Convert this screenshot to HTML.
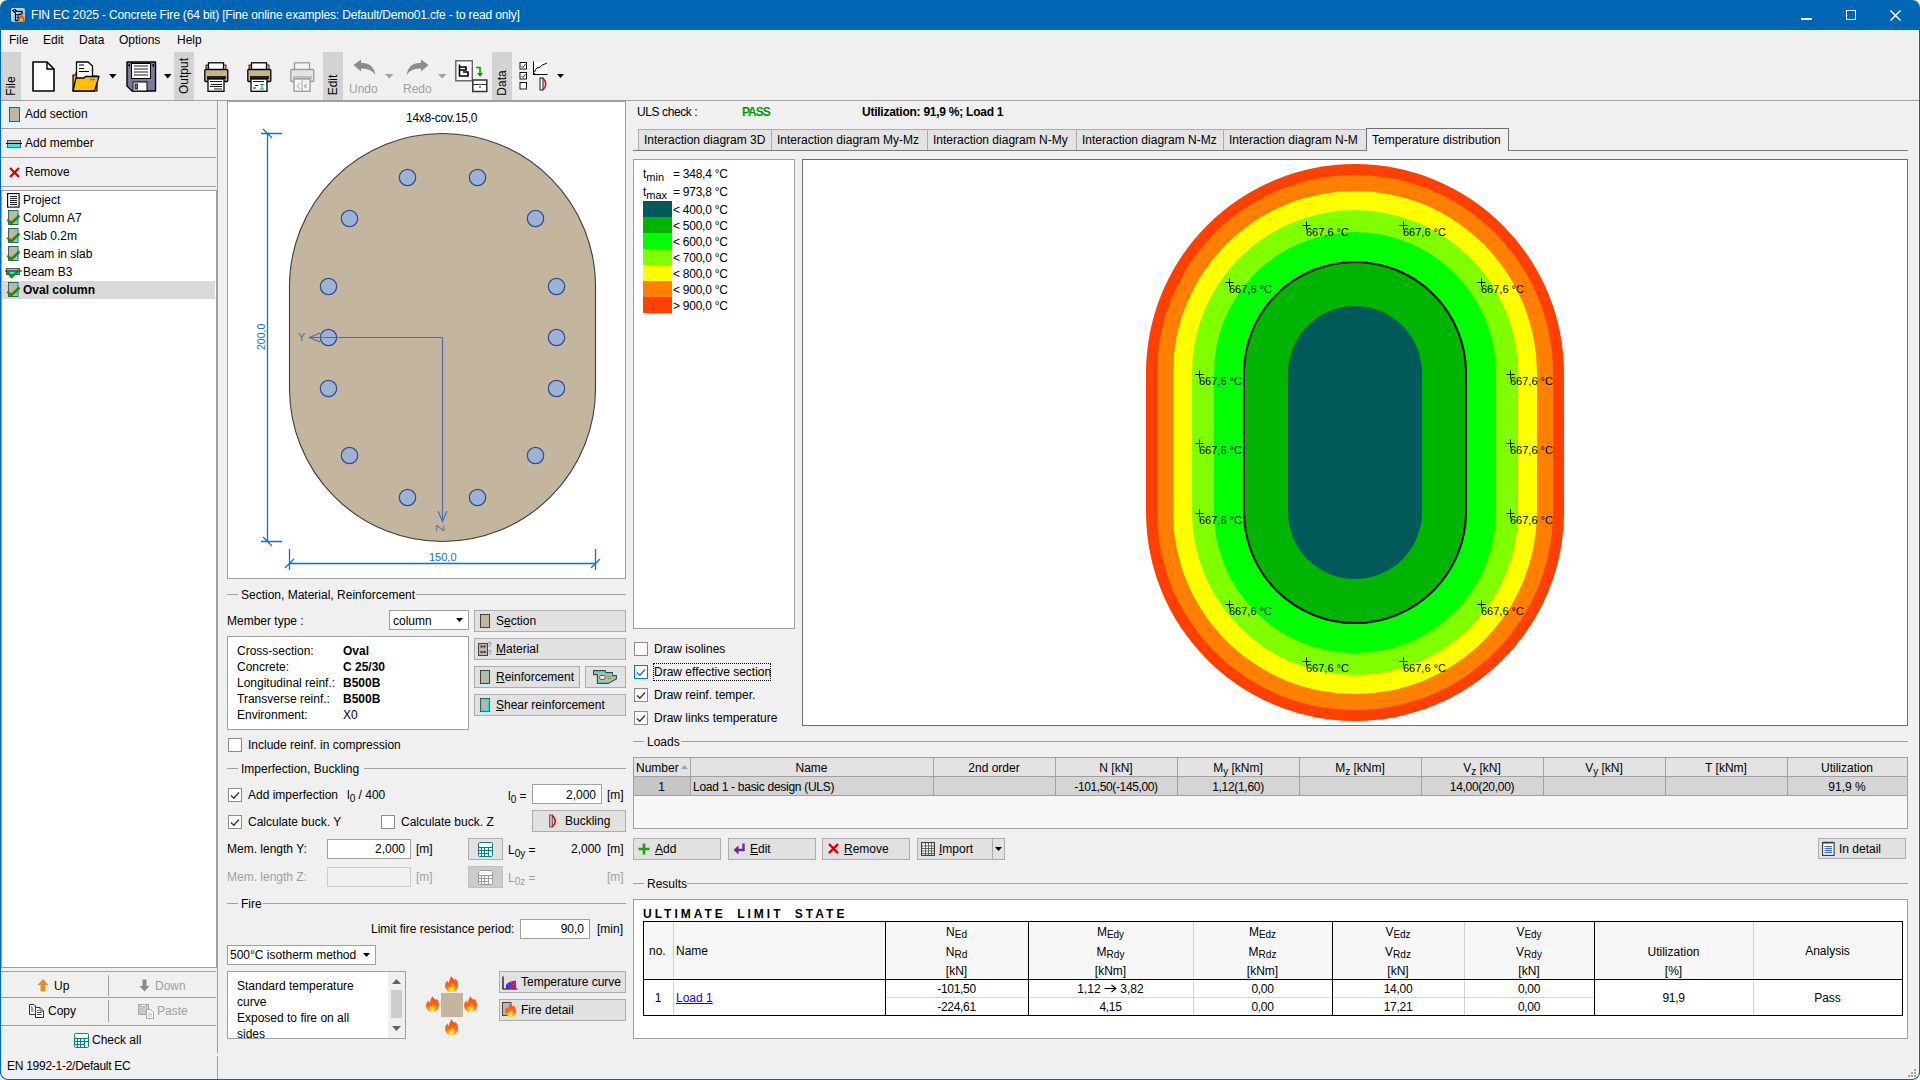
<!DOCTYPE html>
<html><head><meta charset="utf-8">
<style>
*{margin:0;padding:0;box-sizing:border-box}
html,body{width:1920px;height:1080px;overflow:hidden;background:#f0f0f0;font-family:"Liberation Sans",sans-serif;font-size:12px;color:#000}
.a{position:absolute}
.t{position:absolute;white-space:pre;line-height:14px;font-size:12px}
.b{font-weight:bold}
.btn{position:absolute;background:#e1e1e1;border:1px solid #adadad}
.box{position:absolute;background:#fff;border:1px solid #a0a0a0}
.cb{position:absolute;width:14px;height:14px;background:#fff;border:1px solid #333}
.hl{position:absolute;height:1px;background:#a0a0a0}
.vl{position:absolute;width:1px;background:#a0a0a0}
.gray{color:#a0a0a0}
svg{position:absolute;overflow:visible}
u{text-decoration:underline;text-underline-offset:1px}
</style></head><body>
<!-- window frame -->
<div class="a" style="left:0;top:0;width:1920px;height:30px;background:#0066b4;border-radius:8px 8px 0 0"></div>
<div class="a" style="left:0;top:30px;width:1px;height:1044px;background:#0066bb"></div>
<div class="a" style="left:1919px;top:30px;width:1px;height:1044px;background:#0066bb"></div>
<div class="a" style="left:0;top:1072px;width:1920px;height:8px;border:1px solid #0066bb;border-top:none;border-radius:0 0 8px 8px"></div><svg style="left:1909px;top:1069px" width="8" height="8" viewBox="0 0 8 8"><path d="M5 0h2v2H5zM2 3h2v2H2zM5 3h2v2H5zM-1 6h2v2h-2zM2 6h2v2H2zM5 6h2v2H5z" fill="#a0a0a0"/></svg>
<!-- title -->
<svg style="left:11px;top:8px" width="15" height="15" viewBox="0 0 15 15"><defs><linearGradient id="tg" x1="0" y1="0" x2="1" y2="1"><stop offset="0" stop-color="#dcecfb"/><stop offset="1" stop-color="#7fb2e6"/></linearGradient></defs><rect x="0" y="0" width="14" height="14" rx="2" fill="url(#tg)"/><path d="M1.5 2.5L4 1.5L6 3.5L11 3.5V6L7 6.5V12.5H4.5V5Z" fill="#fff" stroke="#000" stroke-width="1.3" stroke-linejoin="round"/><circle cx="4.3" cy="3.5" r="0.7" fill="#00f"/><circle cx="5.5" cy="6.5" r="0.7" fill="#00f"/><circle cx="5" cy="9.5" r="0.7" fill="#00f"/><path d="M10.5 5.5C11 8 13.5 9 13.5 11.5A3.2 3.2 0 0 1 7.2 11.5C7.2 9.5 9.5 8 10.5 5.5Z" fill="#f05010"/><path d="M10.3 9.5C11 10.5 12 11 12 12.3A1.8 1.8 0 0 1 8.6 12.3C8.6 11.3 9.8 10.5 10.3 9.5Z" fill="#ffd000"/></svg>
<div class="t" style="left:31px;top:8px;color:#fff;font-size:12px;letter-spacing:-0.15px">FIN EC 2025 - Concrete Fire (64 bit) [Fine online examples: Default/Demo01.cfe - to read only]</div>
<div class="a" style="left:1801px;top:18px;width:11px;height:2px;background:#fff"></div>
<div class="a" style="left:1846px;top:10px;width:10px;height:10px;border:1px solid #fff"></div>
<svg style="left:1890px;top:10px" width="11" height="11" viewBox="0 0 11 11"><path d="M0.5 0.5L10.5 10.5M10.5 0.5L0.5 10.5" stroke="#fff" stroke-width="1.5"/></svg>
<!-- menu -->
<div class="t" style="left:9px;top:33px">File</div>
<div class="t" style="left:43px;top:33px">Edit</div>
<div class="t" style="left:79px;top:33px">Data</div>
<div class="t" style="left:119px;top:33px">Options</div>
<div class="t" style="left:177px;top:33px">Help</div>
<!-- TOOLBAR -->

<div class="a" style="left:1px;top:52px;width:20px;height:48px;background:#d3d3d3"></div>
<div class="t" style="left:-3px;top:79px;transform:rotate(-90deg);transform-origin:50% 50%;width:28px;text-align:center">File</div>
<div class="a" style="left:174px;top:52px;width:20px;height:48px;background:#d3d3d3"></div>
<div class="t" style="left:164px;top:69px;transform:rotate(-90deg);width:40px;text-align:center">Output</div>
<div class="a" style="left:323px;top:52px;width:20px;height:48px;background:#d3d3d3"></div>
<div class="t" style="left:317px;top:78px;transform:rotate(-90deg);width:32px;text-align:center">Edit</div>
<div class="a" style="left:492px;top:52px;width:20px;height:48px;background:#d3d3d3"></div>
<div class="t" style="left:484px;top:76px;transform:rotate(-90deg);width:36px;text-align:center">Data</div>
<!-- new -->
<svg style="left:32px;top:61px" width="23" height="31" viewBox="0 0 23 31"><path d="M1 1 H15 L22 8 V30 H1 Z" fill="#fff" stroke="#000" stroke-width="1.6" stroke-linejoin="round"/><path d="M15 1 V8 H22" fill="none" stroke="#000" stroke-width="1.4"/></svg>
<!-- open -->
<svg style="left:72px;top:61px" width="28" height="31" viewBox="0 0 28 31"><path d="M1 14 H4 V12 H20 V15 H25 V30 H1Z" fill="#f2b000" stroke="#000" stroke-width="1.2"/><path d="M4.5 1 H16 L20.5 5 V18 H4.5Z" fill="#fff" stroke="#000" stroke-width="1.3"/><path d="M7 4H12M7 7.5H12M7 10.5H17" stroke="#000" stroke-width="1"/><path d="M4 17 H12 L13.5 15.5 H27 L22.5 30 H1 Z" fill="#ffc000" stroke="#000" stroke-width="1.3" stroke-linejoin="round"/><path d="M18 18.5H23" stroke="#7a7a9a" stroke-width="1.5"/></svg>
<svg style="left:109px;top:74px" width="8" height="5" viewBox="0 0 8 5"><path d="M0 0H7.5L3.75 4.5Z" fill="#000"/></svg>
<!-- save -->
<svg style="left:126px;top:61px" width="31" height="31" viewBox="0 0 31 31"><path d="M1 1 H29.5 V30 H6 L1 25Z" fill="#7b7ba0" stroke="#000" stroke-width="1.4" stroke-linejoin="round"/><rect x="5.5" y="2.5" width="19" height="15" fill="#fff" stroke="#000" stroke-width="1"/><path d="M8 5H22M8 8H22M8 11H22M8 14H22" stroke="#000" stroke-width="0.9"/><rect x="7" y="21" width="14" height="9" fill="#fff" stroke="#000" stroke-width="1"/><rect x="9" y="23" width="2.5" height="5" fill="#7b7ba0" stroke="#000" stroke-width="0.8"/><rect x="2.5" y="3" width="1.5" height="2.5" fill="#000"/><rect x="26.5" y="3" width="1.5" height="2.5" fill="#000"/></svg>
<svg style="left:164px;top:74px" width="8" height="5" viewBox="0 0 8 5"><path d="M0 0H7.5L3.75 4.5Z" fill="#000"/></svg>
<!-- printers -->
<svg style="left:204px;top:62px" width="25" height="30" viewBox="0 0 25 30"><rect x="4.5" y="0.8" width="15" height="7" fill="#fff" stroke="#000" stroke-width="1.3"/><rect x="2" y="3" width="2.5" height="5" fill="#a08a60" stroke="#000" stroke-width="0.8"/><rect x="19.5" y="3" width="2.5" height="5" fill="#c8b48a" stroke="#000" stroke-width="0.8"/><rect x="0.8" y="7.5" width="23" height="12" rx="1" fill="#c8b48a" stroke="#000" stroke-width="1.3"/><rect x="3" y="14" width="19" height="3" fill="#222"/><rect x="4" y="17" width="16" height="12.3" fill="#fff" stroke="#000" stroke-width="1.3"/><path d="M6 19.5H18M7 22.5H18M6 24.5H18M10 27H18" stroke="#000" stroke-width="0.9"/></svg>
<svg style="left:247px;top:62px" width="25" height="30" viewBox="0 0 25 30"><rect x="4.5" y="0.8" width="15" height="7" fill="#fff" stroke="#000" stroke-width="1.3"/><rect x="2" y="3" width="2.5" height="5" fill="#a08a60" stroke="#000" stroke-width="0.8"/><rect x="19.5" y="3" width="2.5" height="5" fill="#c8b48a" stroke="#000" stroke-width="0.8"/><rect x="0.8" y="7.5" width="23" height="12" rx="1" fill="#c8b48a" stroke="#000" stroke-width="1.3"/><rect x="3" y="14" width="19" height="3" fill="#222"/><rect x="4" y="17" width="16" height="12.3" fill="#fff" stroke="#000" stroke-width="1.3"/><path d="M6 19.5H17M8 23.5H11M6 26H9" stroke="#000" stroke-width="0.9"/><path d="M13 22.5H17M15 22.5V27M13 27H17" stroke="#109898" stroke-width="1"/></svg>
<svg style="left:290px;top:62px" width="25" height="30" viewBox="0 0 25 30" opacity="0.35"><rect x="4.5" y="0.8" width="15" height="7" fill="#fff" stroke="#000" stroke-width="1.3"/><rect x="0.8" y="7.5" width="23" height="12" rx="1" fill="#ccc" stroke="#000" stroke-width="1.3"/><rect x="3" y="14" width="19" height="3" fill="#666"/><rect x="4" y="17" width="16" height="12.3" fill="#fff" stroke="#000" stroke-width="1.3"/><path d="M12 18V29M10 21L7 24L10 27M14 24L16 22V26Z" stroke="#000" stroke-width="0.9" fill="none"/></svg>
<!-- undo/redo -->
<svg style="left:353px;top:59px" width="24" height="17" viewBox="0 0 24 17"><path d="M0.5 6 L8 0.5 V4 Q20 3 22.5 16 Q18 9 8 9.5 V12.5Z" fill="#8c8c8c"/></svg>
<div class="t" style="left:349px;top:82px;color:#a0a0a0">Undo</div>
<svg style="left:385px;top:74px" width="9" height="5" viewBox="0 0 9 5"><path d="M0 0H8.5L4.25 4.5Z" fill="#a0a0a0"/></svg>
<svg style="left:405px;top:59px" width="24" height="17" viewBox="0 0 24 17"><path d="M23.5 6 L16 0.5 V4 Q4 3 1.5 16 Q6 9 16 9.5 V12.5Z" fill="#8c8c8c"/></svg>
<div class="t" style="left:403px;top:82px;color:#a0a0a0">Redo</div>
<svg style="left:438px;top:74px" width="9" height="5" viewBox="0 0 9 5"><path d="M0 0H8.5L4.25 4.5Z" fill="#a0a0a0"/></svg>
<!-- data icon -->
<svg style="left:455px;top:60px" width="33" height="33" viewBox="0 0 33 33"><rect x="0.8" y="0.8" width="16.5" height="20" fill="#fff" stroke="#606060" stroke-width="1.4"/><path d="M4.5 4.5V16H13V12H8M4.5 10H11V7H4.5" fill="none" stroke="#000" stroke-width="1.6"/><path d="M21 7.5H25V15" stroke="#00a000" stroke-width="1.6" fill="none"/><path d="M22 13L25 17L28 13Z" fill="#00a000"/><rect x="17.8" y="20" width="14" height="11.5" fill="#fff" stroke="#333" stroke-width="1.5"/><path d="M18 24.5H31.5M25 26V28" stroke="#333" stroke-width="1.2"/></svg>
<svg style="left:519px;top:61px" width="46" height="30" viewBox="0 0 46 30"><rect x="1" y="1.5" width="6.5" height="6.5" fill="#fff" stroke="#000" stroke-width="0.9"/><path d="M2.5 5L4 6.5L6.5 3" stroke="#000" fill="none" stroke-width="0.8"/><rect x="1" y="11.5" width="6.5" height="6.5" fill="#fff" stroke="#000" stroke-width="0.9"/><path d="M2.5 15L4 16.5L6.5 13" stroke="#000" fill="none" stroke-width="0.8"/><rect x="1" y="21.5" width="6.5" height="6.5" fill="#fff" stroke="#000" stroke-width="0.9"/><rect x="15" y="1" width="13" height="12" fill="#fff"/><path d="M14.5 0.5V13.5H28.5M14 14L16 12" stroke="#000" stroke-width="1" fill="none"/><path d="M15.5 11Q18 5 20 7Q22 4 28 2" stroke="#000" stroke-width="1" fill="none"/><rect x="21" y="17" width="3" height="12" fill="#fff" stroke="#000" stroke-width="0.9"/><path d="M24 17Q29.5 23 24 29" stroke="#e00000" stroke-width="1.4" fill="none"/><path d="M38 13H45L41.5 17Z" fill="#000"/></svg>

<div class="hl" style="left:1px;top:100px;width:1918px"></div>
<!-- LEFT PANEL -->

<div class="vl" style="left:217px;top:101px;height:952px"></div>
<div class="vl" style="left:217px;top:1056px;height:23px"></div>
<svg style="left:9px;top:107px" width="11" height="15" viewBox="0 0 11 15"><rect x="0.5" y="0.5" width="10" height="14" fill="#c4b59f" stroke="#555"/><rect x="1" y="1" width="2" height="2" fill="#0ff"/><rect x="8" y="1" width="2" height="2" fill="#0ff"/><rect x="1" y="12" width="2" height="2" fill="#0ff"/><rect x="8" y="12" width="2" height="2" fill="#0ff"/></svg>
<div class="t" style="left:25px;top:107px">Add section</div>
<div class="hl" style="left:1px;top:128px;width:215px"></div>
<svg style="left:6px;top:140px" width="16" height="8" viewBox="0 0 16 8"><rect x="1.5" y="0.5" width="13" height="7" fill="#c4b59f" stroke="#555"/><rect x="2" y="4.5" width="12" height="2.5" fill="#0ff"/><path d="M0 3.5H16" stroke="#000" stroke-width="0.9"/></svg>
<div class="t" style="left:25px;top:136px">Add member</div>
<div class="hl" style="left:1px;top:157px;width:215px"></div>
<svg style="left:9px;top:167px" width="11" height="11" viewBox="0 0 11 11"><path d="M1 1L10 10M10 1L1 10" stroke="#d40000" stroke-width="2.4"/></svg>
<div class="t" style="left:25px;top:165px">Remove</div>
<div class="hl" style="left:1px;top:186px;width:215px"></div>
<div class="box" style="left:1px;top:190px;width:216px;height:778px;border-color:#a0a0a0"></div>
<div class="a" style="left:2px;top:281px;width:213px;height:18px;background:#d9d9d9"></div>
<svg style="left:7px;top:193px" width="13" height="15" viewBox="0 0 13 15"><rect x="0.6" y="0.6" width="11.5" height="13.5" fill="#fff" stroke="#000" stroke-width="1.1"/><path d="M3 3.5H10M3 5.5H10M3 7.5H10M3 9.5H10M3 11.5H10" stroke="#000" stroke-width="0.9"/></svg>
<div class="t" style="left:23px;top:193px">Project</div>
<svg style="left:7px;top:210px" width="14" height="16" viewBox="0 0 14 16"><rect x="1.5" y="0.5" width="9.5" height="14" fill="#c4b59f" stroke="#555" stroke-width="1"/><rect x="2" y="1" width="2" height="2" fill="#0ff"/><rect x="8.5" y="1" width="2" height="2" fill="#0ff"/><rect x="2" y="12" width="2" height="2" fill="#0ff"/><rect x="8.5" y="12" width="2" height="2" fill="#0ff"/><path d="M0.5 9.5L4 13.5L12.5 5.5" stroke="#109010" stroke-width="2.6" fill="none"/></svg>
<div class="t" style="left:23px;top:211px">Column A7</div>
<svg style="left:7px;top:228px" width="14" height="16" viewBox="0 0 14 16"><rect x="1.5" y="0.5" width="9.5" height="14" fill="#c4b59f" stroke="#555" stroke-width="1"/><rect x="2" y="1" width="2" height="2" fill="#0ff"/><rect x="8.5" y="1" width="2" height="2" fill="#0ff"/><rect x="2" y="12" width="2" height="2" fill="#0ff"/><rect x="8.5" y="12" width="2" height="2" fill="#0ff"/><path d="M0.5 9.5L4 13.5L12.5 5.5" stroke="#109010" stroke-width="2.6" fill="none"/></svg>
<div class="t" style="left:23px;top:229px">Slab 0.2m</div>
<svg style="left:7px;top:246px" width="14" height="16" viewBox="0 0 14 16"><rect x="1.5" y="0.5" width="9.5" height="14" fill="#c4b59f" stroke="#555" stroke-width="1"/><rect x="2" y="1" width="2" height="2" fill="#0ff"/><rect x="8.5" y="1" width="2" height="2" fill="#0ff"/><rect x="2" y="12" width="2" height="2" fill="#0ff"/><rect x="8.5" y="12" width="2" height="2" fill="#0ff"/><path d="M0.5 9.5L4 13.5L12.5 5.5" stroke="#109010" stroke-width="2.6" fill="none"/></svg>
<div class="t" style="left:23px;top:247px">Beam in slab</div>
<svg style="left:5px;top:267px" width="17" height="13" viewBox="0 0 17 13"><rect x="1.5" y="1.5" width="13" height="6" fill="#c4b59f" stroke="#555"/><rect x="2" y="5" width="12" height="2" fill="#0ff"/><path d="M0 4H17" stroke="#000" stroke-width="0.9"/><path d="M2.5 5L6.5 10L14.5 3" stroke="#109010" stroke-width="2.6" fill="none"/></svg>
<div class="t" style="left:23px;top:265px">Beam B3</div>
<svg style="left:7px;top:282px" width="14" height="16" viewBox="0 0 14 16"><rect x="1.5" y="0.5" width="9.5" height="14" fill="#c4b59f" stroke="#555" stroke-width="1"/><rect x="2" y="1" width="2" height="2" fill="#0ff"/><rect x="8.5" y="1" width="2" height="2" fill="#0ff"/><rect x="2" y="12" width="2" height="2" fill="#0ff"/><rect x="8.5" y="12" width="2" height="2" fill="#0ff"/><path d="M0.5 9.5L4 13.5L12.5 5.5" stroke="#109010" stroke-width="2.6" fill="none"/></svg>
<div class="t b" style="left:23px;top:283px">Oval column</div>
<div class="hl" style="left:1px;top:971px;width:215px"></div>
<div class="vl" style="left:108px;top:975px;height:21px"></div>
<svg style="left:37px;top:979px" width="12" height="13" viewBox="0 0 12 13"><path d="M6 0L11.5 6H8.5V12.5H3.5V6H0.5Z" fill="#e8901e"/></svg>
<div class="t" style="left:54px;top:979px">Up</div>
<svg style="left:139px;top:979px" width="11" height="13" viewBox="0 0 11 13"><path d="M5.5 12.5L0.5 7H3.5V0.5H7.5V7H10.5Z" fill="#8a8a8a"/></svg>
<div class="t gray" style="left:155px;top:979px">Down</div>
<div class="hl" style="left:1px;top:997px;width:215px"></div>
<div class="vl" style="left:108px;top:1000px;height:22px"></div>
<svg style="left:29px;top:1004px" width="16" height="15" viewBox="0 0 16 15"><path d="M0.5 0.5H5L6.5 2V10.5H0.5Z" fill="#fff" stroke="#333" stroke-width="1"/><path d="M2 3H3.5M2 5H4.5M2 7H4.5" stroke="#333" stroke-width="0.9"/><path d="M6.5 3.5H11L14.5 7V13.5H6.5Z" fill="#fff" stroke="#333" stroke-width="1"/><path d="M11 3.5V7H14.5" fill="none" stroke="#333" stroke-width="0.9"/><path d="M8 6.5H9.5M8 8.5H12.5M8 10.5H12.5" stroke="#333" stroke-width="0.9"/></svg>
<div class="t" style="left:48px;top:1004px">Copy</div>
<svg style="left:138px;top:1004px" width="17" height="15" viewBox="0 0 17 15"><rect x="0.5" y="0.5" width="10" height="10" fill="#c8c8c8" stroke="#a8a8a8" stroke-width="1"/><rect x="3" y="0.5" width="5" height="2" fill="#fff" stroke="#a8a8a8" stroke-width="0.8"/><path d="M8.5 5.5H12.5L15.5 8.5V14.5H8.5Z" fill="#fff" stroke="#a8a8a8" stroke-width="1"/><path d="M10 10H14M10 12H14" stroke="#a8a8a8" stroke-width="0.9"/></svg>
<div class="t gray" style="left:157px;top:1004px">Paste</div>
<div class="hl" style="left:1px;top:1025px;width:215px"></div>
<svg style="left:74px;top:1033px" width="15" height="15" viewBox="0 0 15 15"><rect x="0.5" y="0.5" width="14" height="14" rx="1" fill="#fff" stroke="#0a8080" stroke-width="1"/><path d="M0.5 5.5H14.5M0.5 8.5H14.5M0.5 11.5H10.5M3.5 5.5V14.5M6.5 5.5V14.5M10.5 5.5V14.5" stroke="#0a8080" stroke-width="1" fill="none"/></svg>
<div class="t" style="left:92px;top:1033px">Check all</div>
<div class="t" style="left:7px;top:1059px;letter-spacing:-0.27px">EN 1992-1-2/Default EC</div>

<!-- MIDDLE PANEL -->

<div class="box" style="left:227px;top:101px;width:399px;height:478px"></div>
<div class="t" style="left:406px;top:111px;letter-spacing:-0.25px">14x8-cov.15,0</div>
<svg style="left:0;top:0" width="1920" height="1080" viewBox="0 0 1920 1080">
<path d="M289.5 286.5 A153 153 0 0 1 595.5 286.5 L595.5 388.5 A153 153 0 0 1 289.5 388.5 Z" fill="#c4b59f" stroke="#3d3d3d" stroke-width="1.1"/>
<circle cx="407.5" cy="177.5" r="8.2" fill="#9cb3d5" stroke="#2f4b8c" stroke-width="1.2"/><circle cx="477.5" cy="177.5" r="8.2" fill="#9cb3d5" stroke="#2f4b8c" stroke-width="1.2"/><circle cx="349.5" cy="218.5" r="8.2" fill="#9cb3d5" stroke="#2f4b8c" stroke-width="1.2"/><circle cx="535.5" cy="218.5" r="8.2" fill="#9cb3d5" stroke="#2f4b8c" stroke-width="1.2"/><circle cx="328.5" cy="286.5" r="8.2" fill="#9cb3d5" stroke="#2f4b8c" stroke-width="1.2"/><circle cx="556.5" cy="286.5" r="8.2" fill="#9cb3d5" stroke="#2f4b8c" stroke-width="1.2"/><circle cx="328.5" cy="337.5" r="8.2" fill="#9cb3d5" stroke="#2f4b8c" stroke-width="1.2"/><circle cx="556.5" cy="337.5" r="8.2" fill="#9cb3d5" stroke="#2f4b8c" stroke-width="1.2"/><circle cx="328.5" cy="388.5" r="8.2" fill="#9cb3d5" stroke="#2f4b8c" stroke-width="1.2"/><circle cx="556.5" cy="388.5" r="8.2" fill="#9cb3d5" stroke="#2f4b8c" stroke-width="1.2"/><circle cx="349.5" cy="455.5" r="8.2" fill="#9cb3d5" stroke="#2f4b8c" stroke-width="1.2"/><circle cx="535.5" cy="455.5" r="8.2" fill="#9cb3d5" stroke="#2f4b8c" stroke-width="1.2"/><circle cx="407.5" cy="497.5" r="8.2" fill="#9cb3d5" stroke="#2f4b8c" stroke-width="1.2"/><circle cx="477.5" cy="497.5" r="8.2" fill="#9cb3d5" stroke="#2f4b8c" stroke-width="1.2"/>
<g stroke="#4a6cb4" stroke-width="1.2" fill="none">
<path d="M442.5 337.5H309.5M442.5 337.5V521"/>
<path d="M320 333L309.5 337.5L320 342M438 511L442.5 521.5L447 511"/>
</g>
<g stroke="#0a74c4" stroke-width="1.3" fill="none">
<path d="M267.5 133.5V541.5M261 133.5H282M261 541.5H282M263 129L272 138M263 537L272 546"/>
<path d="M289.5 563.5H595.5M289.5 549V570M595.5 549V570M285 568L294 559M591 568L600 559"/>
</g>
</svg>
<div class="t" style="left:298px;top:330px;color:#5a6aaa;font-size:11px">Y</div>
<div class="t" style="left:437px;top:521px;color:#5a6aaa;font-size:11px;transform:rotate(90deg)">Z</div>
<div class="t" style="left:248px;top:330px;color:#0a74c4;font-size:10.5px;transform:rotate(-90deg);width:26px;text-align:center">200,0</div>
<div class="t" style="left:429px;top:550px;color:#0a74c4;font-size:11px">150,0</div>

<div class="hl" style="left:227px;top:594px;width:11px"></div><div class="t" style="left:241px;top:588px">Section, Material, Reinforcement</div><div class="hl" style="left:416px;top:594px;width:210px"></div>
<div class="t" style="left:227px;top:614px">Member type :</div>
<div class="box" style="left:389px;top:610px;width:80px;height:20px;border-color:#a0a0a0"></div>
<div class="t" style="left:393px;top:614px">column</div>
<svg style="left:456px;top:618px" width="7" height="4" viewBox="0 0 7 4"><path d="M0 0H7L3.5 4Z" fill="#000"/></svg>
<div class="btn" style="left:474px;top:610px;width:152px;height:22px"></div>

<svg style="left:480px;top:614px" width="10" height="14" viewBox="0 0 10 14"><rect x="0.5" y="0.5" width="9" height="13" fill="#c4b59f" stroke="#4a4038"/></svg><div class="t" style="left:496px;top:614px">S<u>e</u>ction</div>
<div class="box" style="left:227px;top:636px;width:242px;height:94px;border-color:#a0a0a0"></div>
<div class="t" style="left:237px;top:644px">Cross-section:</div><div class="t b" style="left:343px;top:644px">Oval</div>
<div class="t" style="left:237px;top:660px">Concrete:</div><div class="t b" style="left:343px;top:660px">C 25/30</div>
<div class="t" style="left:237px;top:676px">Longitudinal reinf.:</div><div class="t b" style="left:343px;top:676px">B500B</div>
<div class="t" style="left:237px;top:692px">Transverse reinf.:</div><div class="t b" style="left:343px;top:692px">B500B</div>
<div class="t" style="left:237px;top:708px">Environment:</div><div class="t" style="left:343px;top:708px">X0</div>
<div class="btn" style="left:474px;top:638px;width:152px;height:22px"></div>
<svg style="left:478px;top:641px" width="14" height="16" viewBox="0 0 14 16"><rect x="0.5" y="2.5" width="9" height="12" fill="#c4b59f" stroke="#4a4038"/><path d="M2.5 4.5h2v2h-2zM5.5 4.5h2v2h-2zM2.5 10h2v2h-2zM5.5 10h2v2h-2z" fill="#1e2a80"/><text x="9.6" y="6" font-size="7" fill="#555" font-family="Liberation Sans">?</text><text x="9.6" y="14" font-size="7" fill="#6060ff" font-family="Liberation Sans">?</text></svg>
<div class="t" style="left:496px;top:642px"><u>M</u>aterial</div>
<div class="btn" style="left:474px;top:666px;width:106px;height:22px"></div>

<svg style="left:480px;top:670px" width="10" height="14" viewBox="0 0 10 14"><rect x="0.5" y="0.5" width="9" height="13" fill="#c4b59f" stroke="#4a4038"/><rect x="1" y="1" width="2" height="2" fill="#0ff"/><rect x="7" y="1" width="2" height="2" fill="#0ff"/><rect x="1" y="11" width="2" height="2" fill="#0ff"/><rect x="7" y="11" width="2" height="2" fill="#0ff"/></svg><div class="t" style="left:496px;top:670px"><u>R</u>einforcement</div>
<div class="btn" style="left:585px;top:666px;width:41px;height:22px"></div>
<svg style="left:593px;top:670px" width="25" height="15" viewBox="0 0 25 15"><path d="M0.6 0.6H12.5V2.6H19.5V5.6H23.4V9L15 13.4H4.4V4.6H0.6Z" fill="#c9b89f" stroke="#4a4038" stroke-width="1.1" stroke-linejoin="miter"/><path d="M1.5 1.5h2v2h-2zM4.5 1.5h2v2h-2zM7.5 1.5h2v2h-2zM10.5 1.5h2v2h-2zM13.5 3.5h2v2h-2zM17.5 3.5h2v2h-2zM21 6h2v2h-2zM5 11h2v2H5zM9 11h2v2H9zM13 11h2v2h-2z" fill="#00f0f0"/><rect x="6.8" y="5.5" width="5.2" height="3.8" rx="0.8" fill="#fff" stroke="#4a4038" stroke-width="0.9"/><ellipse cx="16.5" cy="7.5" rx="1.6" ry="1.1" fill="#fff" stroke="#4a4038" stroke-width="0.7"/></svg>
<div class="btn" style="left:474px;top:694px;width:152px;height:22px"></div>

<svg style="left:480px;top:698px" width="10" height="14" viewBox="0 0 10 14"><rect x="0.5" y="0.5" width="9" height="13" fill="#c4b59f" stroke="#4a4038"/><rect x="1.5" y="1.5" width="7" height="11" fill="none" stroke="#00f0f0" stroke-width="1.4"/></svg><div class="t" style="left:496px;top:698px"><u>S</u>hear reinforcement</div>
<div class="cb" style="left:228px;top:738px;border-color:#8c8c8c"></div>
<div class="t" style="left:248px;top:738px">Include reinf. in compression</div>
<div class="hl" style="left:227px;top:768px;width:11px"></div><div class="t" style="left:241px;top:762px">Imperfection, Buckling</div><div class="hl" style="left:364px;top:768px;width:262px"></div><div class="cb" style="left:228px;top:788px;border-color:#8c8c8c"></div><svg style="left:230px;top:791px" width="10" height="9" viewBox="0 0 10 9"><path d="M1 4.5L3.8 7.3L9 1.5" stroke="#333" stroke-width="1.3" fill="none"/></svg>
<div class="t" style="left:248px;top:788px">Add imperfection</div>
<div class="t" style="left:347px;top:788px">l<sub style="font-size:10px;vertical-align:-3px">0</sub> / 400</div>
<div class="t" style="left:508px;top:789px">l<sub style="font-size:10px;vertical-align:-3px">0</sub> =</div>
<div class="box" style="left:532px;top:784px;width:70px;height:20px;border-color:#a0a0a0"></div>
<div class="t" style="left:535px;top:788px;width:61px;text-align:right">2,000</div>
<div class="t" style="left:607px;top:788px">[m]</div>
<div class="cb" style="left:228px;top:815px;border-color:#8c8c8c"></div><svg style="left:230px;top:818px" width="10" height="9" viewBox="0 0 10 9"><path d="M1 4.5L3.8 7.3L9 1.5" stroke="#333" stroke-width="1.3" fill="none"/></svg>
<div class="t" style="left:248px;top:815px">Calculate buck. Y</div>
<div class="cb" style="left:381px;top:815px;border-color:#8c8c8c"></div>
<div class="t" style="left:401px;top:815px">Calculate buck. Z</div>
<div class="btn" style="left:532px;top:810px;width:94px;height:22px"></div>
<svg style="left:549px;top:814px" width="9" height="14" viewBox="0 0 9 14"><rect x="0.5" y="1" width="3" height="12" fill="#c4b59f" stroke="#555" stroke-width="0.8"/><path d="M3 1Q9.5 7 3 13" stroke="#e00000" stroke-width="1.6" fill="none"/></svg>
<div class="t" style="left:565px;top:814px">Buckling</div>
<div class="t" style="left:227px;top:842px">Mem. length Y:</div>
<div class="box" style="left:327px;top:839px;width:84px;height:20px;border-color:#a0a0a0"></div>
<div class="t" style="left:330px;top:842px;width:75px;text-align:right">2,000</div>
<div class="t" style="left:416px;top:842px">[m]</div>
<div class="btn" style="left:468px;top:838px;width:35px;height:22px;"></div><svg style="left:478px;top:842px" width="15" height="15" viewBox="0 0 15 15"><rect x="0.5" y="0.5" width="14" height="14" rx="1.2" fill="#fff" stroke="#0a8080" stroke-width="1"/><path d="M0.5 5.5H14.5M0.5 8.5H14.5M0.5 11.5H10.5M3.5 5.5V14.5M6.5 5.5V14.5M10.5 5.5V14.5" stroke="#0a8080" stroke-width="1" fill="none"/></svg>
<div class="t" style="left:508px;top:843px">L<sub style="font-size:10px;vertical-align:-3px">0y</sub> =</div>
<div class="t" style="left:540px;top:842px;width:61px;text-align:right">2,000</div>
<div class="t" style="left:607px;top:842px">[m]</div>
<div class="t gray" style="left:227px;top:870px">Mem. length Z:</div>
<div class="a" style="left:327px;top:867px;width:84px;height:20px;border:1px solid #ccc;background:#f0f0f0"></div>
<div class="t gray" style="left:416px;top:870px">[m]</div>
<div class="btn" style="left:468px;top:866px;width:35px;height:22px;background:#cccccc;border-color:#bfbfbf"></div><svg style="left:478px;top:870px" width="15" height="15" viewBox="0 0 15 15"><rect x="0.5" y="0.5" width="14" height="14" rx="1.2" fill="#fff" stroke="#9a9a9a" stroke-width="1"/><path d="M0.5 5.5H14.5M0.5 8.5H14.5M0.5 11.5H10.5M3.5 5.5V14.5M6.5 5.5V14.5M10.5 5.5V14.5" stroke="#9a9a9a" stroke-width="1" fill="none"/></svg>
<div class="t gray" style="left:508px;top:871px">L<sub style="font-size:10px;vertical-align:-3px">0z</sub> =</div>
<div class="t gray" style="left:607px;top:870px">[m]</div>
<div class="hl" style="left:227px;top:903px;width:11px"></div><div class="t" style="left:241px;top:897px">Fire</div><div class="hl" style="left:263px;top:903px;width:363px"></div>
<div class="t" style="left:371px;top:922px">Limit fire resistance period:</div>
<div class="box" style="left:520px;top:919px;width:70px;height:20px;border-color:#a0a0a0"></div>
<div class="t" style="left:523px;top:922px;width:61px;text-align:right">90,0</div>
<div class="t" style="left:597px;top:922px">[min]</div>
<div class="box" style="left:227px;top:945px;width:149px;height:20px;border-color:#a0a0a0"></div>
<div class="t" style="left:230px;top:948px">500°C isotherm method</div>
<svg style="left:363px;top:953px" width="7" height="4" viewBox="0 0 7 4"><path d="M0 0H7L3.5 4Z" fill="#000"/></svg>
<div class="box" style="left:227px;top:971px;width:179px;height:68px;border-color:#a0a0a0;overflow:hidden">
 <div class="t" style="left:9px;top:6px;line-height:16px">Standard temperature
curve
Exposed to fire on all
sides</div>
 <div class="a" style="left:160px;top:0;width:17px;height:66px;background:#f0f0f0"></div>
 <div class="a" style="left:163px;top:18px;width:11px;height:28px;background:#cdcdcd"></div>
 <svg style="left:164px;top:7px" width="9" height="5" viewBox="0 0 9 5"><path d="M0 5H9L4.5 0Z" fill="#606060"/></svg>
 <svg style="left:164px;top:54px" width="9" height="5" viewBox="0 0 9 5"><path d="M0 0H9L4.5 5Z" fill="#606060"/></svg>
</div>
<div class="a" style="left:441px;top:993px;width:22px;height:24px;background:#c4b59f"></div><svg style="left:0;top:0" width="0" height="0"><defs><linearGradient id="fl" x1="0" y1="0" x2="0" y2="1"><stop offset="0" stop-color="#ff4a10"/><stop offset="0.6" stop-color="#ff6a1a"/><stop offset="1" stop-color="#ffa020"/></linearGradient><radialGradient id="fli" cx="0.5" cy="0.8" r="0.6"><stop offset="0" stop-color="#fff080"/><stop offset="0.5" stop-color="#ffd030"/><stop offset="1" stop-color="#ffa000"/></radialGradient><linearGradient id="tcg" x1="0" y1="0" x2="1" y2="0"><stop offset="0" stop-color="#2020ff"/><stop offset="0.5" stop-color="#8020c0"/><stop offset="1" stop-color="#ff1010"/></linearGradient></defs></svg><svg style="left:445px;top:976px" width="13" height="16" viewBox="0 0 13 16"><path d="M6.2 0.3C7.8 2.5 9 3.5 10 4.2C10.3 3.6 10.4 3 10.3 2.3C12 4 13 6.5 13 9.3C13 13 10.2 16 6.5 16C2.8 16 0 13.2 0 9.8C0 7.5 1.2 5.8 2.5 4.6C2.6 5.6 3 6.4 3.6 6.9C4.2 4.5 5 2.3 6.2 0.3Z" fill="url(#fl)"/><path d="M6.8 7.5C8.2 9 10 10.5 10 12.8C10 14.7 8.5 16 6.5 16C4.5 16 3 14.7 3 12.9C3 11.2 4 10.3 5 9.6C5.2 10.3 5.5 10.8 6 11C6 9.8 6.2 8.5 6.8 7.5Z" fill="url(#fli)"/></svg><svg style="left:426px;top:996px" width="13" height="16" viewBox="0 0 13 16"><path d="M6.2 0.3C7.8 2.5 9 3.5 10 4.2C10.3 3.6 10.4 3 10.3 2.3C12 4 13 6.5 13 9.3C13 13 10.2 16 6.5 16C2.8 16 0 13.2 0 9.8C0 7.5 1.2 5.8 2.5 4.6C2.6 5.6 3 6.4 3.6 6.9C4.2 4.5 5 2.3 6.2 0.3Z" fill="url(#fl)"/><path d="M6.8 7.5C8.2 9 10 10.5 10 12.8C10 14.7 8.5 16 6.5 16C4.5 16 3 14.7 3 12.9C3 11.2 4 10.3 5 9.6C5.2 10.3 5.5 10.8 6 11C6 9.8 6.2 8.5 6.8 7.5Z" fill="url(#fli)"/></svg><svg style="left:464px;top:996px" width="13" height="16" viewBox="0 0 13 16"><path d="M6.2 0.3C7.8 2.5 9 3.5 10 4.2C10.3 3.6 10.4 3 10.3 2.3C12 4 13 6.5 13 9.3C13 13 10.2 16 6.5 16C2.8 16 0 13.2 0 9.8C0 7.5 1.2 5.8 2.5 4.6C2.6 5.6 3 6.4 3.6 6.9C4.2 4.5 5 2.3 6.2 0.3Z" fill="url(#fl)"/><path d="M6.8 7.5C8.2 9 10 10.5 10 12.8C10 14.7 8.5 16 6.5 16C4.5 16 3 14.7 3 12.9C3 11.2 4 10.3 5 9.6C5.2 10.3 5.5 10.8 6 11C6 9.8 6.2 8.5 6.8 7.5Z" fill="url(#fli)"/></svg><svg style="left:445px;top:1019px" width="13" height="16" viewBox="0 0 13 16"><path d="M6.2 0.3C7.8 2.5 9 3.5 10 4.2C10.3 3.6 10.4 3 10.3 2.3C12 4 13 6.5 13 9.3C13 13 10.2 16 6.5 16C2.8 16 0 13.2 0 9.8C0 7.5 1.2 5.8 2.5 4.6C2.6 5.6 3 6.4 3.6 6.9C4.2 4.5 5 2.3 6.2 0.3Z" fill="url(#fl)"/><path d="M6.8 7.5C8.2 9 10 10.5 10 12.8C10 14.7 8.5 16 6.5 16C4.5 16 3 14.7 3 12.9C3 11.2 4 10.3 5 9.6C5.2 10.3 5.5 10.8 6 11C6 9.8 6.2 8.5 6.8 7.5Z" fill="url(#fli)"/></svg>

<div class="btn" style="left:499px;top:971px;width:127px;height:22px"></div>
<svg style="left:502px;top:976px" width="16" height="14" viewBox="0 0 16 14"><path d="M4 12.5V9Q6 5 14 4.5V12.5Z" fill="url(#tcg)"/><path d="M6 8h1v1H6zM9 6h1v1H9zM11 8h1v1h-1zM8 10h1v1H8z" fill="#d080ff" opacity="0.7"/><path d="M1 0.5V13H15.5" stroke="#000" stroke-width="1.2" fill="none"/></svg>
<div class="t" style="left:521px;top:975px">Temperature curve</div>
<div class="btn" style="left:499px;top:999px;width:127px;height:22px"></div>
<svg style="left:502px;top:1002px" width="16" height="17" viewBox="0 0 16 17"><rect x="0.5" y="0.5" width="8.5" height="13" fill="#c4b59f" stroke="#4a4038" stroke-width="1"/><rect x="1" y="1" width="1.6" height="1.6" fill="#0ff"/><rect x="7" y="1" width="1.6" height="1.6" fill="#0ff"/><rect x="1" y="11.4" width="1.6" height="1.6" fill="#0ff"/></svg><svg style="left:505px;top:1003px" width="11" height="14" viewBox="0 0 13 16"><path d="M6.2 0.3C7.8 2.5 9 3.5 10 4.2C10.3 3.6 10.4 3 10.3 2.3C12 4 13 6.5 13 9.3C13 13 10.2 16 6.5 16C2.8 16 0 13.2 0 9.8C0 7.5 1.2 5.8 2.5 4.6C2.6 5.6 3 6.4 3.6 6.9C4.2 4.5 5 2.3 6.2 0.3Z" fill="url(#fl)"/><path d="M6.8 7.5C8.2 9 10 10.5 10 12.8C10 14.7 8.5 16 6.5 16C4.5 16 3 14.7 3 12.9C3 11.2 4 10.3 5 9.6C5.2 10.3 5.5 10.8 6 11C6 9.8 6.2 8.5 6.8 7.5Z" fill="url(#fli)"/></svg>
<div class="t" style="left:521px;top:1003px">Fire detail</div>

<!-- RIGHT PANEL -->

<div class="t" style="left:637px;top:105px;letter-spacing:-0.4px">ULS check :</div>
<div class="t b" style="left:742px;top:105px;color:#009a00;letter-spacing:-1px">PASS</div>
<div class="t b" style="left:862px;top:105px;letter-spacing:-0.25px">Utilization: 91,9 %; Load 1</div>
<div class="a" style="left:633px;top:150px;width:1275px;height:1px;background:#7a7a7a"></div>
<div class="a" style="left:638px;top:129px;width:134px;height:21px;background:#e3e3e3;border:1px solid #adadad;border-bottom:none"></div><div class="t" style="left:644px;top:133px">Interaction diagram 3D</div><div class="a" style="left:771px;top:129px;width:157px;height:21px;background:#e3e3e3;border:1px solid #adadad;border-bottom:none"></div><div class="t" style="left:777px;top:133px">Interaction diagram My-Mz</div><div class="a" style="left:927px;top:129px;width:150px;height:21px;background:#e3e3e3;border:1px solid #adadad;border-bottom:none"></div><div class="t" style="left:933px;top:133px">Interaction diagram N-My</div><div class="a" style="left:1076px;top:129px;width:148px;height:21px;background:#e3e3e3;border:1px solid #adadad;border-bottom:none"></div><div class="t" style="left:1082px;top:133px">Interaction diagram N-Mz</div><div class="a" style="left:1223px;top:129px;width:145px;height:21px;background:#e3e3e3;border:1px solid #adadad;border-bottom:none"></div><div class="t" style="left:1229px;top:133px">Interaction diagram N-M</div>
<div class="a" style="left:1366px;top:128px;width:143px;height:23px;background:#f0f0f0;border:1px solid #6e6e6e;border-bottom:none"></div>
<div class="t" style="left:1372px;top:133px">Temperature distribution</div>
<div class="box" style="left:633px;top:159px;width:162px;height:470px;border-color:#a0a0a0"></div>
<div class="t" style="left:643px;top:167px">t<sub style="font-size:11px;vertical-align:-3px">min</sub></div><div class="t" style="left:673px;top:167px;letter-spacing:-0.25px">= 348,4 °C</div>
<div class="t" style="left:643px;top:185px">t<sub style="font-size:11px;vertical-align:-3px">max</sub></div><div class="t" style="left:673px;top:185px;letter-spacing:-0.25px">= 973,8 °C</div>
<div class="a" style="left:643px;top:201px;width:29px;height:16px;background:#005a5a"></div>
<div class="a" style="left:643px;top:217px;width:29px;height:16px;background:#00b400"></div>
<div class="a" style="left:643px;top:233px;width:29px;height:16px;background:#00ff00"></div>
<div class="a" style="left:643px;top:249px;width:29px;height:16px;background:#80ff00"></div>
<div class="a" style="left:643px;top:265px;width:29px;height:16px;background:#ffff00"></div>
<div class="a" style="left:643px;top:281px;width:29px;height:16px;background:#ff8000"></div>
<div class="a" style="left:643px;top:297px;width:29px;height:16px;background:#ff4000"></div>
<div class="t" style="left:673px;top:203px;letter-spacing:-0.25px">&lt; 400,0 °C</div>
<div class="t" style="left:673px;top:219px;letter-spacing:-0.25px">&lt; 500,0 °C</div>
<div class="t" style="left:673px;top:235px;letter-spacing:-0.25px">&lt; 600,0 °C</div>
<div class="t" style="left:673px;top:251px;letter-spacing:-0.25px">&lt; 700,0 °C</div>
<div class="t" style="left:673px;top:267px;letter-spacing:-0.25px">&lt; 800,0 °C</div>
<div class="t" style="left:673px;top:283px;letter-spacing:-0.25px">&lt; 900,0 °C</div>
<div class="t" style="left:673px;top:299px;letter-spacing:-0.25px">&gt; 900,0 °C</div>
<div class="a" style="left:802px;top:159px;width:1106px;height:567px;background:#fff;border:1px solid #6e6e6e"></div>
<svg style="left:0;top:0" width="1920" height="1080" viewBox="0 0 1920 1080"><path d="M1146 373 A209 209 0 0 1 1564 373 L1564 512 A209 209 0 0 1 1146 512 Z" fill="#ff4000"/><path d="M1157 373 A198 198 0 0 1 1553 373 L1553 512 A198 198 0 0 1 1157 512 Z" fill="#ff8000"/><path d="M1173 373 A182 182 0 0 1 1537 373 L1537 512 A182 182 0 0 1 1173 512 Z" fill="#ffff00"/><path d="M1192 373 A163 163 0 0 1 1518 373 L1518 512 A163 163 0 0 1 1192 512 Z" fill="#80ff00"/><path d="M1214 373 A141 141 0 0 1 1496 373 L1496 512 A141 141 0 0 1 1214 512 Z" fill="#00ff00"/><path d="M1244 373 A111 111 0 0 1 1466 373 L1466 512 A111 111 0 0 1 1244 512 Z" fill="#00b400" stroke="#000" stroke-width="2"/><path d="M1288 373 A67 67 0 0 1 1422 373 L1422 512 A67 67 0 0 1 1288 512 Z" fill="#005a5a"/><path d="M1302.5 225.5H1310.5M1306.5 221.5V229.5" stroke="#000" stroke-width="1"/><path d="M1399.5 225.5H1407.5M1403.5 221.5V229.5" stroke="#000" stroke-width="1"/><path d="M1225.5 282.5H1233.5M1229.5 278.5V286.5" stroke="#000" stroke-width="1"/><path d="M1477.5 282.5H1485.5M1481.5 278.5V286.5" stroke="#000" stroke-width="1"/><path d="M1195.5 374.5H1203.5M1199.5 370.5V378.5" stroke="#000" stroke-width="1"/><path d="M1506.5 374.5H1514.5M1510.5 370.5V378.5" stroke="#000" stroke-width="1"/><path d="M1195.5 443.5H1203.5M1199.5 439.5V447.5" stroke="#000" stroke-width="1"/><path d="M1506.5 443.5H1514.5M1510.5 439.5V447.5" stroke="#000" stroke-width="1"/><path d="M1195.5 513.5H1203.5M1199.5 509.5V517.5" stroke="#000" stroke-width="1"/><path d="M1506.5 513.5H1514.5M1510.5 509.5V517.5" stroke="#000" stroke-width="1"/><path d="M1225.5 604.5H1233.5M1229.5 600.5V608.5" stroke="#000" stroke-width="1"/><path d="M1477.5 604.5H1485.5M1481.5 600.5V608.5" stroke="#000" stroke-width="1"/><path d="M1302.5 661.5H1310.5M1306.5 657.5V665.5" stroke="#000" stroke-width="1"/><path d="M1399.5 661.5H1407.5M1403.5 657.5V665.5" stroke="#000" stroke-width="1"/></svg><div class="t" style="left:1306px;top:225px;font-size:11px">667,6 °C</div><div class="t" style="left:1403px;top:225px;font-size:11px">667,6 °C</div><div class="t" style="left:1229px;top:282px;font-size:11px">667,6 °C</div><div class="t" style="left:1481px;top:282px;font-size:11px">667,6 °C</div><div class="t" style="left:1199px;top:374px;font-size:11px">667,6 °C</div><div class="t" style="left:1510px;top:374px;font-size:11px">667,6 °C</div><div class="t" style="left:1199px;top:443px;font-size:11px">667,6 °C</div><div class="t" style="left:1510px;top:443px;font-size:11px">667,6 °C</div><div class="t" style="left:1199px;top:513px;font-size:11px">667,6 °C</div><div class="t" style="left:1510px;top:513px;font-size:11px">667,6 °C</div><div class="t" style="left:1229px;top:604px;font-size:11px">667,6 °C</div><div class="t" style="left:1481px;top:604px;font-size:11px">667,6 °C</div><div class="t" style="left:1306px;top:661px;font-size:11px">667,6 °C</div><div class="t" style="left:1403px;top:661px;font-size:11px">667,6 °C</div><div class="cb" style="left:634px;top:642px;border-color:#8c8c8c"></div><div class="t" style="left:654px;top:642px">Draw isolines</div><div class="cb" style="left:634px;top:665px;border-color:#0078d7"></div><svg style="left:636px;top:668px" width="10" height="9" viewBox="0 0 10 9"><path d="M1 4.5L3.8 7.3L9 1.5" stroke="#0078d7" stroke-width="1.3" fill="none"/></svg><div class="a" style="left:653px;top:663px;width:118px;height:18px;border:1px dotted #000"></div><div class="t" style="left:654px;top:665px">Draw effective section</div><div class="cb" style="left:634px;top:688px;border-color:#8c8c8c"></div><svg style="left:636px;top:691px" width="10" height="9" viewBox="0 0 10 9"><path d="M1 4.5L3.8 7.3L9 1.5" stroke="#333" stroke-width="1.3" fill="none"/></svg><div class="t" style="left:654px;top:688px">Draw reinf. temper.</div><div class="cb" style="left:634px;top:711px;border-color:#8c8c8c"></div><svg style="left:636px;top:714px" width="10" height="9" viewBox="0 0 10 9"><path d="M1 4.5L3.8 7.3L9 1.5" stroke="#333" stroke-width="1.3" fill="none"/></svg><div class="t" style="left:654px;top:711px">Draw links temperature</div><div class="hl" style="left:633px;top:741px;width:11px"></div><div class="t" style="left:647px;top:735px">Loads</div><div class="hl" style="left:681px;top:741px;width:1227px"></div><div class="a" style="left:633px;top:757px;width:1275px;height:72px;background:#f7f7f7;border:1px solid #a0a0a0"></div><div class="a" style="left:634px;top:758px;width:1273px;height:18px;background:#e3e3e3"></div><div class="a" style="left:634px;top:776px;width:1273px;height:20px;background:#d5d5d5;border-top:1px solid #a0a0a0;border-bottom:1px solid #a0a0a0"></div><div class="a" style="left:634px;top:777px;width:56px;height:18px;background:#c6c6c6"></div><div class="vl" style="left:690px;top:758px;height:38px"></div><div class="vl" style="left:933px;top:758px;height:38px"></div><div class="vl" style="left:1055px;top:758px;height:38px"></div><div class="vl" style="left:1177px;top:758px;height:38px"></div><div class="vl" style="left:1299px;top:758px;height:38px"></div><div class="vl" style="left:1421px;top:758px;height:38px"></div><div class="vl" style="left:1543px;top:758px;height:38px"></div><div class="vl" style="left:1665px;top:758px;height:38px"></div><div class="vl" style="left:1787px;top:758px;height:38px"></div><div class="t" style="left:636px;top:761px">Number</div><svg style="left:681px;top:765px" width="7" height="4" viewBox="0 0 7 4"><path d="M0 4H7L3.5 0Z" fill="#a0a0a0"/></svg><div class="t" style="left:633px;top:780px;width:57px;text-align:center">1</div><div class="t" style="left:690px;top:761px;width:243px;text-align:center">Name</div><div class="t" style="left:693px;top:780px;letter-spacing:-0.28px">Load 1 - basic design (ULS)</div><div class="t" style="left:933px;top:761px;width:122px;text-align:center">2nd order</div><div class="t" style="left:1055px;top:761px;width:122px;text-align:center">N [kN]</div><div class="t" style="left:1055px;top:780px;width:122px;text-align:center;letter-spacing:-0.37px">-101,50(-145,00)</div><div class="t" style="left:1177px;top:761px;width:122px;text-align:center">M<sub style="font-size:10px;vertical-align:-3px">y</sub> [kNm]</div><div class="t" style="left:1177px;top:780px;width:122px;text-align:center;letter-spacing:-0.3px">1,12(1,60)</div><div class="t" style="left:1299px;top:761px;width:122px;text-align:center">M<sub style="font-size:10px;vertical-align:-3px">z</sub> [kNm]</div><div class="t" style="left:1421px;top:761px;width:122px;text-align:center">V<sub style="font-size:10px;vertical-align:-3px">z</sub> [kN]</div><div class="t" style="left:1421px;top:780px;width:122px;text-align:center;letter-spacing:-0.3px">14,00(20,00)</div><div class="t" style="left:1543px;top:761px;width:122px;text-align:center">V<sub style="font-size:10px;vertical-align:-3px">y</sub> [kN]</div><div class="t" style="left:1665px;top:761px;width:122px;text-align:center">T [kNm]</div><div class="t" style="left:1787px;top:761px;width:120px;text-align:center">Utilization</div><div class="t" style="left:1787px;top:780px;width:120px;text-align:center">91,9 %</div>
<div class="btn" style="left:633px;top:838px;width:88px;height:22px"></div>
<svg style="left:638px;top:843px" width="12" height="12" viewBox="0 0 12 12"><path d="M6 0.5V11.5M0.5 6H11.5" stroke="#1aa01a" stroke-width="2.6"/></svg>
<div class="t" style="left:655px;top:842px"><u>A</u>dd</div>
<div class="btn" style="left:728px;top:838px;width:88px;height:22px"></div>
<svg style="left:733px;top:843px" width="13" height="12" viewBox="0 0 13 12"><path d="M10.5 0.5V7H5" stroke="#6b2a9a" stroke-width="2.4" fill="none"/><path d="M0.5 7L5.5 2.5V11.5Z" fill="#6b2a9a"/></svg>
<div class="t" style="left:750px;top:842px"><u>E</u>dit</div>
<div class="btn" style="left:822px;top:838px;width:88px;height:22px"></div>
<svg style="left:828px;top:843px" width="11" height="11" viewBox="0 0 11 11"><path d="M1 1L10 10M10 1L1 10" stroke="#d40000" stroke-width="2.4"/></svg>
<div class="t" style="left:844px;top:842px"><u>R</u>emove</div>
<div class="btn" style="left:917px;top:838px;width:88px;height:22px"></div>
<div class="vl" style="left:992px;top:839px;height:20px;background:#adadad"></div>
<svg style="left:921px;top:842px" width="14" height="14" viewBox="0 0 14 14"><rect x="0.6" y="0.6" width="12.8" height="12.8" fill="#fff" stroke="#333" stroke-width="1.1"/><path d="M1 4H13M1 6.5H13M1 9H13M1 11.5H13M4.5 1V13M7.5 1V13M10.5 1V13" stroke="#333" stroke-width="0.7"/></svg>
<div class="t" style="left:939px;top:842px"><u>I</u>mport</div>
<svg style="left:995px;top:847px" width="7" height="4" viewBox="0 0 7 4"><path d="M0 0H7L3.5 4Z" fill="#000"/></svg>
<div class="btn" style="left:1818px;top:838px;width:88px;height:21px"></div>
<svg style="left:1822px;top:841px" width="13" height="15" viewBox="0 0 13 15"><rect x="0.6" y="1.6" width="11.5" height="12.8" fill="#fff" stroke="#333" stroke-width="1.1"/><path d="M2 0.5V3M4 0.5V3M6 0.5V3M8 0.5V3M10 0.5V3" stroke="#333" stroke-width="0.8"/><path d="M2.5 5.5H10M2.5 7.5H10M2.5 9.5H10M2.5 11.5H10" stroke="#1a5ad0" stroke-width="0.9"/></svg>
<div class="t" style="left:1839px;top:842px">In detail</div>
<div class="hl" style="left:633px;top:883px;width:11px"></div><div class="t" style="left:647px;top:877px">Results</div><div class="hl" style="left:687px;top:883px;width:1221px"></div>
<div class="box" style="left:633px;top:899px;width:1275px;height:140px;border-color:#a0a0a0"></div>
<div class="t b" style="left:643px;top:907px;letter-spacing:3px;word-spacing:5px">ULTIMATE LIMIT STATE</div>
<div class="a" style="left:643px;top:921px;width:1260px;height:59px;background:#f7f7f7"></div>
<div class="a" style="left:643px;top:921px;width:1px;height:95px;background:#000"></div><div class="a" style="left:673px;top:921px;width:1px;height:95px;background:#d0d0d0"></div><div class="a" style="left:885px;top:921px;width:1px;height:95px;background:#000"></div><div class="a" style="left:1028px;top:921px;width:1px;height:95px;background:#000"></div><div class="a" style="left:1193px;top:921px;width:1px;height:95px;background:#d0d0d0"></div><div class="a" style="left:1332px;top:921px;width:1px;height:95px;background:#000"></div><div class="a" style="left:1464px;top:921px;width:1px;height:95px;background:#d0d0d0"></div><div class="a" style="left:1594px;top:921px;width:1px;height:95px;background:#000"></div><div class="a" style="left:1753px;top:921px;width:1px;height:95px;background:#d0d0d0"></div><div class="a" style="left:1902px;top:921px;width:1px;height:95px;background:#000"></div><div class="a" style="left:643px;top:921px;width:1260px;height:1px;background:#000"></div><div class="a" style="left:643px;top:979px;width:1260px;height:1px;background:#000"></div><div class="a" style="left:643px;top:1015px;width:1260px;height:1px;background:#000"></div><div class="a" style="left:886px;top:997px;width:142px;height:1px;background:#d8d8d8"></div><div class="a" style="left:1029px;top:997px;width:164px;height:1px;background:#d8d8d8"></div><div class="a" style="left:1194px;top:997px;width:138px;height:1px;background:#d8d8d8"></div><div class="a" style="left:1333px;top:997px;width:131px;height:1px;background:#d8d8d8"></div><div class="a" style="left:1465px;top:997px;width:129px;height:1px;background:#d8d8d8"></div><div class="t" style="left:649px;top:944px">no.</div><div class="t" style="left:676px;top:944px">Name</div><div class="t" style="left:885px;top:925px;width:143px;text-align:center">N<sub style="font-size:10px;vertical-align:-2px">Ed</sub></div><div class="t" style="left:885px;top:945px;width:143px;text-align:center">N<sub style="font-size:10px;vertical-align:-2px">Rd</sub></div><div class="t" style="left:885px;top:964px;width:143px;text-align:center">[kN]</div><div class="t" style="left:1028px;top:925px;width:165px;text-align:center">M<sub style="font-size:10px;vertical-align:-2px">Edy</sub></div><div class="t" style="left:1028px;top:945px;width:165px;text-align:center">M<sub style="font-size:10px;vertical-align:-2px">Rdy</sub></div><div class="t" style="left:1028px;top:964px;width:165px;text-align:center">[kNm]</div><div class="t" style="left:1193px;top:925px;width:139px;text-align:center">M<sub style="font-size:10px;vertical-align:-2px">Edz</sub></div><div class="t" style="left:1193px;top:945px;width:139px;text-align:center">M<sub style="font-size:10px;vertical-align:-2px">Rdz</sub></div><div class="t" style="left:1193px;top:964px;width:139px;text-align:center">[kNm]</div><div class="t" style="left:1332px;top:925px;width:132px;text-align:center">V<sub style="font-size:10px;vertical-align:-2px">Edz</sub></div><div class="t" style="left:1332px;top:945px;width:132px;text-align:center">V<sub style="font-size:10px;vertical-align:-2px">Rdz</sub></div><div class="t" style="left:1332px;top:964px;width:132px;text-align:center">[kN]</div><div class="t" style="left:1464px;top:925px;width:130px;text-align:center">V<sub style="font-size:10px;vertical-align:-2px">Edy</sub></div><div class="t" style="left:1464px;top:945px;width:130px;text-align:center">V<sub style="font-size:10px;vertical-align:-2px">Rdy</sub></div><div class="t" style="left:1464px;top:964px;width:130px;text-align:center">[kN]</div><div class="t" style="left:1594px;top:945px;width:159px;text-align:center">Utilization</div><div class="t" style="left:1594px;top:964px;width:159px;text-align:center">[%]</div><div class="t" style="left:1753px;top:944px;width:149px;text-align:center">Analysis</div><div class="t" style="left:885px;top:982px;width:143px;text-align:center;letter-spacing:-0.3px">-101,50</div><div class="t" style="left:885px;top:1000px;width:143px;text-align:center;letter-spacing:-0.3px">-224,61</div><div class="t" style="left:1028px;top:982px;width:165px;text-align:center">1,12 <svg style="position:relative;display:inline-block;vertical-align:middle;top:-1px" width="13" height="9" viewBox="0 0 13 9"><path d="M0.5 4.5H11.5M7.5 1L11.8 4.5L7.5 8" stroke="#000" stroke-width="1.1" fill="none"/></svg> 3,82</div><div class="t" style="left:1028px;top:1000px;width:165px;text-align:center;letter-spacing:-0.3px">4,15</div><div class="t" style="left:1193px;top:982px;width:139px;text-align:center;letter-spacing:-0.3px">0,00</div><div class="t" style="left:1193px;top:1000px;width:139px;text-align:center;letter-spacing:-0.3px">0,00</div><div class="t" style="left:1332px;top:982px;width:132px;text-align:center;letter-spacing:-0.3px">14,00</div><div class="t" style="left:1332px;top:1000px;width:132px;text-align:center;letter-spacing:-0.3px">17,21</div><div class="t" style="left:1464px;top:982px;width:130px;text-align:center;letter-spacing:-0.3px">0,00</div><div class="t" style="left:1464px;top:1000px;width:130px;text-align:center;letter-spacing:-0.3px">0,00</div><div class="t" style="left:643px;top:991px;width:30px;text-align:center">1</div><div class="t" style="left:676px;top:991px;color:#2200d0"><u>Load 1</u></div><div class="t" style="left:1594px;top:991px;width:159px;text-align:center;letter-spacing:-0.3px">91,9</div><div class="t" style="left:1753px;top:991px;width:149px;text-align:center">Pass</div>
</body></html>
